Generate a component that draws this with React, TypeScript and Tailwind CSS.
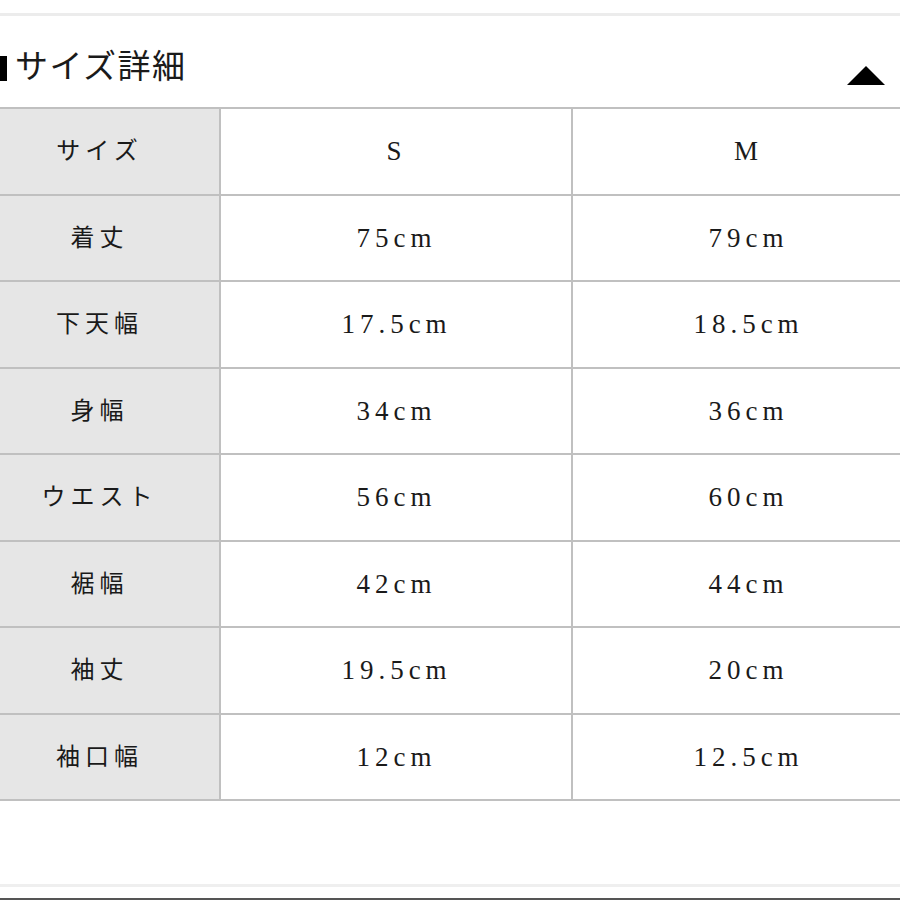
import React from "react";

const rows: [string, string, string][] = [
  ["サイズ", "S", "M"],
  ["着丈", "75cm", "79cm"],
  ["下天幅", "17.5cm", "18.5cm"],
  ["身幅", "34cm", "36cm"],
  ["ウエスト", "56cm", "60cm"],
  ["裾幅", "42cm", "44cm"],
  ["袖丈", "19.5cm", "20cm"],
  ["袖口幅", "12cm", "12.5cm"],
];

export default function App() {
  return (
    <div
      className="w-[900px] h-[900px] overflow-hidden bg-white text-[#1a1a1a] flex flex-col"
      style={{ fontFamily: '"Liberation Serif", "Noto Sans CJK JP", serif' }}
    >
      <div className="h-[13px] shrink-0" />
      <div className="h-[3px] bg-[#ececec] shrink-0" />
      <div className="h-[91px] shrink-0 flex items-center justify-between pt-[12px] pr-[15px]">
        <div className="flex items-center">
          <div className="w-[7px] h-[25px] bg-black mt-[2px]" />
          <span className="ml-[8px] text-[33px] leading-none tracking-[1.5px]">サイズ詳細</span>
        </div>
        <svg width="38" height="19" viewBox="0 0 38 19" className="mt-[16px]">
          <polygon points="19,0 38,19 0,19" fill="#000" />
        </svg>
      </div>
      <div className="ml-[-25px] w-[946px] border-t-[2px] border-[#c0c0c0] shrink-0">
        {rows.map(([label, s, m], i) => (
          <div key={i} className="flex h-[86.5px] border-b-[2px] border-[#c0c0c0]">
            <div className="w-[246px] bg-[#e6e6e6] border-r-[2px] border-[#c0c0c0] flex items-center justify-center text-[24px] tracking-[5px] pl-[5px]">
              {label}
            </div>
            <div className="w-[352px] border-r-[2px] border-[#c0c0c0] flex items-center justify-center text-[27px] tracking-[5px] pl-[1px]">
              {s}
            </div>
            <div className="w-[348px] flex items-center justify-center text-[27px] tracking-[5px] pl-[3px]">
              {m}
            </div>
          </div>
        ))}
      </div>
      <div className="h-[83px] shrink-0" />
      <div className="h-[3px] bg-[#efefef] shrink-0" />
      <div className="h-[11px] shrink-0" />
      <div className="h-[3px] bg-[#555] shrink-0" />
    </div>
  );
}
